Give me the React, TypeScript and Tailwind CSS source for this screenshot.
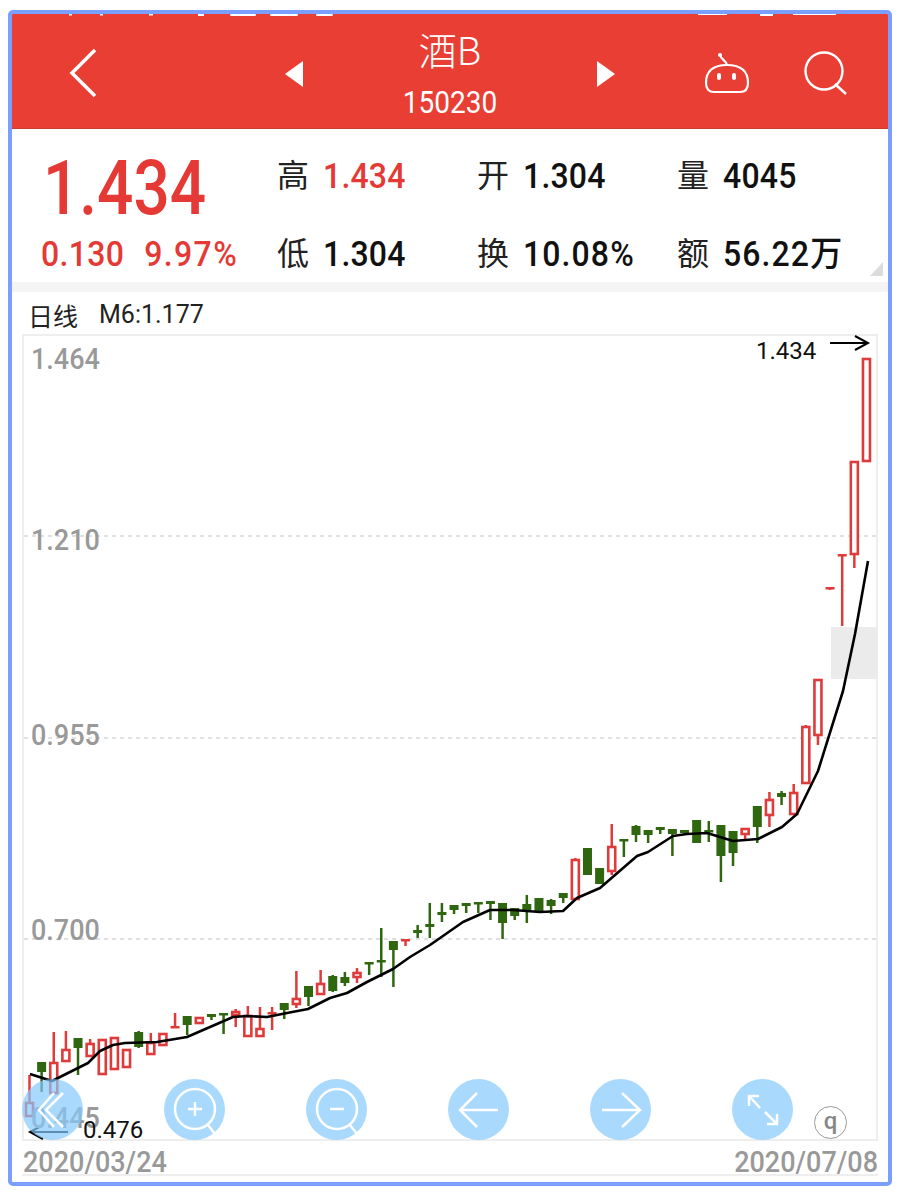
import React from "react";

type C = ["r" | "g", number, number, number, number];
// type, wick top, wick bottom, body top, body bottom (page pixel coordinates of the chart canvas)
const candles: C[] = [
  ["r",1075,1102,1102,1116],["g",1062,1092,1062,1072],["r",1032,1093,1062,1093],["r",1031,1061,1049,1061],
  ["g",1038,1075,1038,1048],["r",1039,1056,1043,1056],["r",1039,1074,1039,1074],["r",1037,1069,1037,1069],
  ["r",1049,1067,1049,1067],["g",1031,1048,1032,1047],["r",1033,1054,1042,1054],["r",1033,1045,1033,1045],
  ["r",1013,1028,1026,1028],["g",1016,1035,1016,1025],["r",1017,1023,1017,1023],["g",1014,1020,1014,1017],
  ["g",1013,1034,1013,1015],["r",1009,1027,1011,1015],["r",1006,1036,1015,1036],["r",1007,1036,1028,1036],
  ["r",1007,1030,1012,1014],["g",1003,1019,1003,1010],["r",971,1008,998,1004],["g",986,1006,986,997],
  ["r",970,994,983,994],["g",975,992,976,991],["g",972,986,977,983],["r",968,983,972,977],
  ["g",962,975,962,964],["g",928,977,960,962],["g",941,987,941,950],["r",939,946,939,941],
  ["g",925,938,930,933],["g",903,938,924,927],["g",903,922,912,915],["g",905,914,905,910],
  ["g",903,913,903,906],["g",902,913,902,904],["g",901,920,901,904],["g",903,939,903,923],
  ["g",908,920,908,916],["g",895,923,904,910],["g",898,911,898,911],["g",899,914,900,906],
  ["g",893,903,893,898],["r",858,899,859,899],["g",848,875,848,875],["g",868,884,868,884],
  ["r",824,875,846,871],["g",839,857,839,841],["g",825,842,826,835],["g",830,843,830,835],
  ["g",827,834,827,830],["g",829,856,829,834],["g",830,835,830,833],["g",820,843,820,843],
  ["g",821,842,830,832],["g",825,882,825,856],["g",831,866,831,853],["r",828,841,828,834],
  ["g",806,843,806,827],["r",792,827,799,815],["g",791,805,793,797],["r",784,814,792,814],
  ["r",725,783,726,783],["r",679,745,679,735],["r",587,590,587,589],["r",554,626,554,556],
  ["r",461,568,461,554],["r",358,461,358,461],
];

const maLine =
  "30,1074 52,1081 88,1063 100,1051 113,1045 125,1043 157,1042 187,1037 210,1027 233,1017 247,1016 267,1017 287,1013 308,1009 330,998 347,993 367,982 393,969 410,957 430,945 463,922 490,910 513,910 540,912 563,911 577,898 600,888 637,856 648,852 673,836 687,834 707,833 733,841 758,839 782,827 797,814 818,771 843,691 855,634 868,561";

const RED = "#e03b3b";
const GREEN = "#2f6610";

function Candle({ c, i }: { c: C; i: number }) {
  const [t, wt, wb, bt, bb] = c;
  const x = 29.5 + i * 12.13;
  const color = t === "r" ? RED : GREEN;
  const h = bb - bt;
  const thin = h < 4;
  return (
    <g>
      <line x1={x} x2={x} y1={wt} y2={wb} stroke={color} strokeWidth={2.5} />
      {t === "g" || thin ? (
        <rect x={x - 4.5} y={bt} width={9} height={Math.max(h, 2.5)} fill={color} />
      ) : (
        <rect x={x - 3.5} y={bt + 1} width={7} height={h - 1} fill="#fff" stroke={color} strokeWidth={2.6} />
      )}
    </g>
  );
}

function Stat({ label, value, red, wide }: { label: string; value: string; red?: boolean; wide?: boolean }) {
  return (
    <div className="flex items-center h-[44px] text-[32px] leading-none text-[#222]">
      <span className="w-[46px]">{label}</span>
      <span
        className={`inline-block scale-y-110 font-medium ${wide ? "tracking-[1.1px]" : "tracking-[0.2px]"} ${
          red ? "text-[#e53935]" : "text-[#111]"
        }`}
      >
        {value}
      </span>
    </div>
  );
}

function CircleButton({ children }: { children: React.ReactNode }) {
  return (
    <div className="w-[61px] h-[61px] rounded-full bg-[#84c9fb]/70 flex items-center justify-center">
      <svg width="61" height="61" viewBox="0 0 61 61" fill="none" stroke="#fff" strokeWidth="2.5">
        {children}
      </svg>
    </div>
  );
}

function AxisLabel({ className, children }: { className: string; children: string }) {
  return <span className={`absolute inline-block scale-y-110 text-[27px] leading-none font-medium text-[#999] ${className}`}>{children}</span>;
}

export default function App() {
  return (
    <div className="w-[900px] h-[1195px] bg-white pt-[10px] pl-[8px] font-['Roboto','Noto_Sans_CJK_SC',sans-serif]">
      <div className="w-[884px] h-[1176px] border-4 border-[#7a9fff] rounded-[5px] bg-white overflow-hidden flex flex-col">
        {/* Header */}
        <div className="relative h-[115px] shrink-0 bg-[#e83e33] border-b border-[#c93a30] flex items-center text-white">
          <svg className="absolute left-0 top-0" width="876" height="4" viewBox="12 14 876 4" fill="#fff">
            <rect x="69" y="14" width="3" height="1.5" />
            <rect x="100" y="14" width="3" height="1.5" />
            <rect x="149" y="14" width="4" height="1.5" />
            <rect x="198" y="14" width="6" height="2" />
            <rect x="230" y="14" width="26" height="2" rx="1" />
            <rect x="270" y="14" width="28" height="2" rx="1" />
            <rect x="316" y="14" width="17" height="2" rx="1" />
            <rect x="698" y="14" width="29" height="1" />
            <rect x="760" y="14" width="13" height="2" />
            <rect x="793" y="14" width="43" height="1" />
          </svg>
          <svg className="ml-[57px] mt-[3px] shrink-0" width="28" height="50" viewBox="0 0 28 50" fill="none" stroke="#fff" strokeWidth="3.5">
            <path d="M26 2 L3 25 L26 48" />
          </svg>
          <svg className="ml-[188px] mt-[5px] shrink-0" width="18" height="26" viewBox="0 0 18 26" fill="#fff">
            <path d="M18 0 L0 13 L18 26 Z" />
          </svg>
          <div className="w-[294px] mt-[12px] flex flex-col items-center">
            <div className="text-[38px] leading-[44px] -mt-[8px] font-['Noto_Sans_CJK_SC','Roboto',sans-serif] font-light">酒B</div>
            <div className="mt-[16px] inline-block scale-y-110 text-[28px] leading-[32px]">150230</div>
          </div>
          <svg className="mt-[5px] shrink-0" width="18" height="26" viewBox="0 0 18 26" fill="#fff">
            <path d="M0 0 L18 13 L0 26 Z" />
          </svg>
          <svg className="ml-[89px] mt-[3px] shrink-0" width="46" height="42" viewBox="0 0 46 42" fill="none" stroke="#fff" strokeWidth="2.2">
            <path d="M2 31 C2 18 10 13 23 13 C36 13 44 18 44 31 C44 37 41 40 36 40 L10 40 C5 40 2 37 2 31 Z" />
            <path d="M23 13 C23 9 17 8 16 3" />
            <circle cx="16" cy="3" r="2" fill="#fff" stroke="none" />
            <rect x="13" y="21" width="4" height="7" rx="2" fill="#fff" stroke="none" />
            <rect x="28" y="21" width="4" height="7" rx="2" fill="#fff" stroke="none" />
          </svg>
          <svg className="ml-[53px] mt-[3px] shrink-0" width="44" height="44" viewBox="0 0 44 44" fill="none" stroke="#fff" strokeWidth="2.4">
            <circle cx="21" cy="20" r="18.5" />
            <path d="M32 33 L43 43" />
          </svg>
        </div>

        {/* Quote */}
        <div className="relative h-[153px] shrink-0 pt-[25px] grid grid-cols-[265px_200px_200px_200px] grid-rows-[44px_44px] gap-y-[34px]">
          <div className="pl-[31px] text-[71px] leading-[60px] font-medium text-[#e53935]">
            <span className="inline-block mt-[2px] scale-x-[0.9] scale-y-[1.08] origin-top-left">1.434</span>
          </div>
          <Stat label="高" value="1.434" red />
          <Stat label="开" value="1.304" />
          <Stat label="量" value="4045" />
          <div className="pl-[29px] flex items-center gap-[20px] text-[32px] leading-none font-medium text-[#e53935]">
            <span className="inline-block scale-y-110 tracking-[0.3px]">0.130</span>
            <span className="inline-block scale-y-110 tracking-[1.4px]">9.97%</span>
          </div>
          <Stat label="低" value="1.304" />
          <Stat label="换" value="10.08%" wide />
          <Stat label="额" value="56.22万" wide />
          <svg className="absolute right-[5px] bottom-[6px]" width="13" height="14" viewBox="0 0 13 14" fill="#dcdcdc">
            <path d="M13 0 L13 14 L0 14 Z" />
          </svg>
        </div>

        <div className="h-[10px] shrink-0 bg-[#f4f4f4]" />

        {/* Chart label */}
        <div className="h-[42px] shrink-0 pl-[16px] pt-[8px] flex items-start gap-[21px] text-[25px] leading-[30px] text-[#222]">
          <span className="font-['Noto_Sans_CJK_SC',sans-serif]">日线</span>
          <span>M6:1.177</span>
        </div>

        {/* Chart */}
        <div className="relative ml-[10px] w-[856px] h-[807px] shrink-0 border-2 border-[#eeeeee]">
          <svg className="absolute -left-[2px] -top-[2px]" width="856" height="807" viewBox="22 334 856 807">
            <rect x="831" y="627" width="47" height="52" fill="#ebebeb" />
            <g stroke="#d6d6d6" strokeWidth="1.5" strokeDasharray="4 4">
              <line x1="24" x2="876" y1="536" y2="536" />
              <line x1="24" x2="876" y1="738" y2="738" />
              <line x1="24" x2="876" y1="939" y2="939" />
            </g>
            {candles.map((c, i) => (
              <Candle key={i} c={c} i={i} />
            ))}
            <polyline points={maLine} fill="none" stroke="#000" strokeWidth="2.6" strokeLinejoin="round" />
            <path d="M830 343 L867 343 M855 336 L868 343 L855 350" fill="none" stroke="#000" strokeWidth="2" />
            <path d="M68 1132 L31 1132 M43 1125 L30 1132 L43 1139" fill="none" stroke="#000" strokeWidth="2" />
          </svg>

          <AxisLabel className="left-[7px] top-[10px]">1.464</AxisLabel>
          <AxisLabel className="left-[7px] top-[191px]">1.210</AxisLabel>
          <AxisLabel className="left-[7px] top-[386px]">0.955</AxisLabel>
          <AxisLabel className="left-[7px] top-[581px]">0.700</AxisLabel>
          <AxisLabel className="left-[7px] top-[769px]">0.445</AxisLabel>

          <span className="absolute left-[732px] top-[1px] text-[24px] leading-[28px] text-[#111]">1.434</span>
          <span className="absolute left-[59px] top-[780px] text-[24px] leading-[28px] text-[#111]">0.476</span>

          {/* Floating round controls */}
          <div className="absolute left-[-2px] top-[743px] w-[771px] flex justify-between">
            <CircleButton>
              <path d="M32 14 L17 31 L32 48 M41 14 L24 31 L41 48" />
            </CircleButton>
            <CircleButton>
              <circle cx="31" cy="30" r="20" />
              <path d="M44 46 L51 55 M31 23 L31 37 M24 30 L38 30" />
            </CircleButton>
            <CircleButton>
              <circle cx="31" cy="30" r="20" />
              <path d="M44 46 L51 55 M24 30 L38 30" />
            </CircleButton>
            <CircleButton>
              <path d="M50 31 L13 31 M29 14 L12 31 L29 48" />
            </CircleButton>
            <CircleButton>
              <path d="M12 31 L49 31 M32 14 L50 31 L32 48" />
            </CircleButton>
            <CircleButton>
              <path d="M18 18 L28 29 M17 27 L17 17 L27 17 M33 33 L44 44 M45 35 L45 45 L35 45" />
            </CircleButton>
          </div>

          <div className="absolute left-[790px] top-[770px] w-[33px] h-[33px] rounded-full bg-white border border-[#999] flex items-center justify-center text-[24px] leading-none font-medium text-[#888] pb-[4px]">
            q
          </div>
        </div>

        {/* Dates */}
        <div className="ml-[10px] w-[856px] h-[35px] shrink-0 flex justify-between items-center border-b-2 border-[#eeeeee] text-[27px] leading-none font-medium text-[#999] pt-[9px] pl-[1px]">
          <span className="inline-block scale-y-110">2020/03/24</span>
          <span className="inline-block scale-y-110">2020/07/08</span>
        </div>
      </div>
    </div>
  );
}
